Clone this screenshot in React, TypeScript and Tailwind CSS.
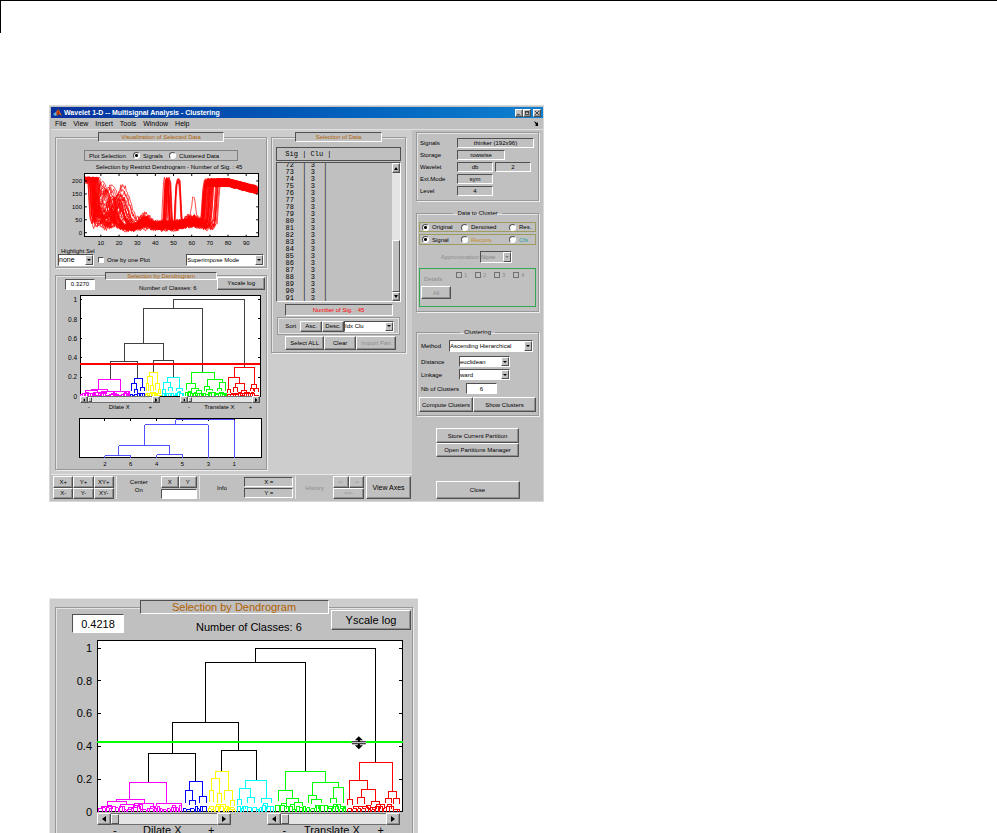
import { ReactNode } from 'react';
import { clsx } from 'clsx';

type Branch = [number, number, number, number, number];

// [left, right, top, left foot, right foot]
const trunk: Branch[] = [
  [158, 278, 8, 22, 122],
  [108, 208, 22, 82, 131],
  [75, 141, 82, 113, 110],
  [51, 98, 113, 142, 141],
  [124, 159, 110, 131, 140],
];

const clusters: { color: string; from: number; to: number; branches: Branch[] }[] = [
  {
    color: '#ff00ff', from: 1, to: 84,
    branches: [[32, 69, 142, 159, 163], [19, 47, 159, 161, 163], [59, 84, 163, 166, 167], [10, 29, 161, 165, 164], [23, 36, 164, 167, 167], [37, 56, 163, 166, 167], [4, 15, 166, 168, 168]],
  },
  {
    color: '#0000ff', from: 86, to: 110,
    branches: [[92, 105, 141, 150, 156], [88, 95, 150, 163, 160], [102, 109, 156, 163, 163], [92, 98, 160, 165, 165]],
  },
  {
    color: '#ffff00', from: 111, to: 138,
    branches: [[118, 131, 131, 138, 150], [114, 122, 138, 150, 153], [127, 135, 150, 160, 160], [112, 116, 150, 162, 162], [120, 124, 153, 163, 163], [133, 137, 160, 166, 166]],
  },
  {
    color: '#00ffff', from: 140, to: 176,
    branches: [[148, 169, 140, 148, 158], [142, 153, 148, 159, 157], [164, 174, 158, 163, 163], [150, 157, 157, 163, 163], [140, 144, 159, 165, 165]],
  },
  {
    color: '#00ff00', from: 178, to: 248,
    branches: [[188, 228, 131, 150, 142], [181, 195, 150, 161, 158], [215, 241, 142, 155, 147], [189, 201, 158, 165, 162], [211, 219, 155, 163, 159], [236, 246, 147, 158, 163], [214, 224, 159, 164, 163], [233, 239, 158, 163, 163], [197, 205, 162, 166, 166]],
  },
  {
    color: '#ff0000', from: 250, to: 303,
    branches: [[262, 295, 122, 140, 151], [252, 270, 140, 159, 149], [264, 278, 149, 157, 161], [291, 299, 151, 158, 158], [260, 267, 157, 164, 164], [274, 282, 161, 165, 165], [250, 255, 159, 165, 165], [288, 294, 158, 163, 163], [296, 302, 158, 164, 164]],
  },
];

const miniTree: Branch[] = [
  [96, 155, 1, 6, 39],
  [65, 129, 6, 27, 39],
  [39, 90, 27, 37, 36],
  [25, 51, 37, 39, 39],
  [77, 103, 36, 39, 39],
];

const miniLabels = ['2', '6', '4', '5', '3', '1'];

const toPath = (branches: Branch[]) =>
  branches.map(([l, r, t, lf, rf]) => `M${l} ${lf}V${t}H${r}V${rf}`).join('');

const noise = (n: number) => {
  const v = Math.sin(n * 12.9898) * 43758.5453;
  return v - Math.floor(v);
};

// The dense fringe of small brackets at the foot of each cluster
const leafPath = (from: number, to: number) => {
  let d = '';
  let x = from;
  while (x + 2 <= to) {
    const w = Math.min(2 + Math.floor(noise(x) * 3), to - x);
    const top = 165 + Math.floor(noise(x + 400) * 5);
    d += `M${x} 171V${top}H${x + w}V171`;
    if (noise(x + 800) > 0.6 && x + w + 2 <= to) {
      d += `M${x + 1} ${top}V${top - 2}H${x + w + 2}V168`;
    }
    x += w + Math.floor(noise(x + 90) * 2);
  }
  return d;
};

const bump = (x: number, c: number, w: number) => Math.exp(-(((x - c) / w) ** 4));
const hill = (x: number, c: number, w: number) => Math.exp(-(((x - c) / w) ** 2));
const step = (x: number, c: number, w = 0.6) => 1 / (1 + Math.exp(-(x - c) / w));

const signalPath = (i: number) => {
  const drop = 3.5 + noise(i) * 5.5;
  const rise = 65.5 + noise(i + 50) * 10;
  const hump = 11 + noise(i + 100) * 12;
  const humpHeight = 30 + noise(i + 150) * 125;
  const base = 10 + noise(i + 200) * 34;
  let d = '';
  for (let x = 1.5; x <= 96; x += 0.5) {
    const jitter = noise(i * 211 + x * 7) - 0.5;
    let y = base + jitter * 18 - hill(x, 29, 9) * base * 0.35;
    y += 185 * (1 - step(x, drop, 0.3));
    y += 75 * hill(x, 9, 3) * noise(i + 7);
    y += humpHeight * hill(x, hump, 3 + noise(i + 9) * 3);
    y += noise(i + 250) * 45 * hill(x, 34, 4);
    if (i % 3 === 0) y += 180 * bump(x, 45 + noise(i + 2) * 3, 1.3);
    if (i % 9 === 1) y += 175 * bump(x, 51.8 + noise(i + 3), 1.6);
    if (i === 5) y += 95 * hill(x, 61, 1.5);
    y += noise(i + 4) * 30 * hill(x, 60, 5);
    const up = step(x, rise, 0.35);
    const plateau = 194 - Math.max(0, x - 80) * 1.8 + jitter * 34;
    y = y * (1 - up) + plateau * up;
    y = Math.min(y, 206 + jitter * 20);
    d += `${d ? 'L' : 'M'}${(16 + (x - 10) * 1.825).toFixed(1)} ${(59 - y * 0.26).toFixed(1)}`;
  }
  return d;
};

const signals = Array.from({ length: 45 }, (_, i) => signalPath(i));

const raised = 'border border-t-white border-l-white border-r-[#505050] border-b-[#505050] bg-[#c0c0c0]';
const sunken = 'border border-t-[#505050] border-l-[#505050] border-r-white border-b-white';
const groove = 'min-w-0 border border-[#989898] shadow-[1px_1px_0_#eeeeee,inset_1px_1px_0_#e4e4e4]';

function Button({ children, className, disabled }: { children: ReactNode; className?: string; disabled?: boolean }) {
  return (
    <button
      type="button"
      disabled={disabled}
      className={clsx(
        'flex items-center justify-center whitespace-nowrap shadow-[inset_-1px_-1px_0_#909090]',
        raised,
        disabled && 'text-[#8c8c8c]',
        className
      )}
    >
      {children}
    </button>
  );
}

function Select({ value, label, className, disabled }: { value: string; label: string; className?: string; disabled?: boolean }) {
  return (
    <div className={clsx('relative', sunken, disabled ? 'bg-[#c0c0c0]' : 'bg-white', className)}>
      <select
        aria-label={label}
        disabled={disabled}
        defaultValue={value}
        className={clsx('block h-full w-full appearance-none bg-transparent', disabled && 'text-[#808080]')}
      >
        <option>{value}</option>
      </select>
      <span className={clsx('pointer-events-none absolute inset-y-0 right-0 flex w-2 items-center justify-center', raised)}>
        <svg viewBox="0 0 4 2" className="w-1" fill={disabled ? '#808080' : '#000'}>
          <path d="M0 0H4L2 2Z" />
        </svg>
      </span>
    </div>
  );
}

function Radio({ name, label, checked, className }: { name: string; label: string; checked?: boolean; className?: string }) {
  return (
    <label className={clsx('flex items-center gap-[3px] whitespace-nowrap', className)}>
      <input
        type="radio"
        name={name}
        defaultChecked={checked}
        className="size-[7px] shrink-0 appearance-none rounded-full border border-t-[#505050] border-l-[#505050] border-r-white border-b-white bg-white checked:bg-[radial-gradient(#000_0_1px,#fff_2px)]"
      />
      {label}
    </label>
  );
}

function Slider({ label, large }: { label: string; large?: boolean }) {
  const arrow = large ? 'w-[14px]' : 'w-2';
  return (
    <div className={clsx('flex min-w-0 flex-1', large ? 'h-3' : 'h-[7px]')}>
      <Button className={clsx('shrink-0', arrow)}>
        <svg viewBox="0 0 4 6" className={large ? 'h-[6px]' : 'h-[4px]'}><path d="M4 0V6L0 3Z" /></svg>
      </Button>
      <input
        type="range"
        aria-label={label}
        defaultValue={0}
        className={clsx(
          'h-full w-full min-w-0 flex-1 appearance-none border-y border-[#707070] bg-[#e4e4e4]',
          '[&::-webkit-slider-thumb]:appearance-none [&::-webkit-slider-thumb]:border [&::-webkit-slider-thumb]:border-t-white [&::-webkit-slider-thumb]:border-l-white [&::-webkit-slider-thumb]:border-r-[#505050] [&::-webkit-slider-thumb]:border-b-[#505050] [&::-webkit-slider-thumb]:bg-[#c0c0c0]',
          large
            ? '[&::-webkit-slider-thumb]:h-[10px] [&::-webkit-slider-thumb]:w-2'
            : '[&::-webkit-slider-thumb]:h-[5px] [&::-webkit-slider-thumb]:w-1'
        )}
      />
      <Button className={clsx('shrink-0', arrow)}>
        <svg viewBox="0 0 4 6" className={large ? 'h-[6px]' : 'h-[4px]'}><path d="M0 0V6L4 3Z" /></svg>
      </Button>
    </div>
  );
}

function Dendrogram({ threshold, color, cursor }: { threshold: number; color: string; cursor?: boolean }) {
  return (
    <svg viewBox="-22 -2 332 174" className="block w-full overflow-visible" fill="none">
      <g shapeRendering="crispEdges" strokeWidth="1">
        <rect width="305" height="171" fill="#fff" stroke="#000" vectorEffect="non-scaling-stroke" />
        {[8, 40, 73, 106, 139].map((y) => (
          <path key={y} d={`M0 ${y}h4M305 ${y}h-4`} stroke="#000" vectorEffect="non-scaling-stroke" />
        ))}
        <path d={toPath(trunk)} stroke={cursor ? '#000' : '#404040'} vectorEffect="non-scaling-stroke" />
        {clusters.map((c) => (
          <path
            key={c.color}
            d={toPath(c.branches) + leafPath(c.from, c.to)}
            stroke={c.color}
            vectorEffect="non-scaling-stroke"
          />
        ))}
        <path d={`M0 ${threshold}H305`} stroke={color} strokeWidth="2" vectorEffect="non-scaling-stroke" />
      </g>
      <g fill="#000" fontSize="11" textAnchor="end">
        {['1', '0.8', '0.6', '0.4', '0.2', '0'].map((t, i) => (
          <text key={t} x="-5" y={12 + i * 32.6}>{t}</text>
        ))}
      </g>
      {cursor && (
        <g>
          <path d="M254 99h14v6h-14z" fill="#fff" />
          <path d="M261 96l4 4h-3v1h6v1h-14v-1h6v-1h-3zM261 109l4-4h-3v-1h6v-1h-14v1h6v1h-3z" fill="#000" />
        </g>
      )}
    </svg>
  );
}

function SliderRow({ large }: { large?: boolean }) {
  return (
    <div className={large ? 'mr-2 ml-[22px]' : 'mr-[3px] ml-[13px]'}>
      <div className={clsx('flex', large ? 'gap-9' : 'gap-5')}>
        <Slider label="Dilate X" large={large} />
        <Slider label="Translate X" large={large} />
      </div>
      <div className={clsx('flex', large ? 'gap-9 leading-[10px]' : 'gap-5')}>
        {['Dilate X', 'Translate X'].map((t) => (
          <div key={t} className={clsx('flex flex-1 justify-between', large ? 'px-4' : 'px-2')}>
            <span>-</span>
            <span>{t}</span>
            <span>+</span>
          </div>
        ))}
      </div>
    </div>
  );
}

function MiniTree() {
  return (
    <svg viewBox="-13 -1 197 51" className="block w-full" fill="none">
      <g shapeRendering="crispEdges">
        <rect width="182" height="39" fill="#fff" stroke="#000" />
        {miniLabels.map((t, i) => <path key={t} d={`M${25 + i * 26} 0v2`} stroke="#000" />)}
        <path d={toPath(miniTree)} stroke="#5050ff" />
      </g>
      <g fill="#000" fontSize="6" textAnchor="middle">
        {miniLabels.map((t, i) => <text key={t} x={25 + i * 26} y="47">{t}</text>)}
      </g>
    </svg>
  );
}

function SignalsPlot() {
  return (
    <svg viewBox="-16 -2 194 76" className="block w-full" fill="none">
      <rect width="174" height="63" fill="#fff" stroke="#000" shapeRendering="crispEdges" />
      {signals.map((d, i) => <path key={i} d={d} stroke="#ff0000" strokeWidth="0.7" />)}
      {[7, 20, 33, 46, 59].map((y) => <path key={y} d={`M0 ${y}h2M174 ${y}h-2`} stroke="#000" />)}
      <g fill="#000" fontSize="6" textAnchor="end">
        {[200, 150, 100, 50, 0].map((v, i) => <text key={v} x="-3" y={9 + i * 13}>{v}</text>)}
      </g>
      <g fill="#000" fontSize="6" textAnchor="middle">
        {[10, 20, 30, 40, 50, 60, 70, 80, 90].map((v, i) => (
          <g key={v}>
            <path d={`M${16 + i * 18.25} 0v2M${16 + i * 18.25} 63v-2`} stroke="#000" />
            <text x={16 + i * 18.25} y="71">{v}</text>
          </g>
        ))}
      </g>
    </svg>
  );
}

function VisualizationPanel() {
  return (
    <fieldset className={clsx('bg-[#c0c0c0] pb-px', groove)}>
      <legend className={clsx('mx-auto h-[10px] w-[126px] bg-[#c0c0c0] text-center text-[#b06000]', sunken)}>
        Visualization of Selected Data
      </legend>
      <div className="mx-auto mt-2 flex h-[11px] w-[154px] items-center border border-[#808080] pl-1">
        <span className="w-11">Plot Selection</span>
        <Radio name="plot" label="Signals" checked className="w-9" />
        <Radio name="plot" label="Clustered Data" />
      </div>
      <p className="mt-[2px] mb-px pl-4 text-center">Selection by Restrict Dendrogram - Number of Sig. : 45</p>
      <div className="pr-1 pl-[13px]">
        <SignalsPlot />
      </div>
      <p className="pl-[5px] leading-[6px]">Highlight Sel</p>
      <div className="flex items-center px-[2px]">
        <Select label="Highlight Sel" value="none" className="h-3 w-9 text-[7px]" />
        <label className="ml-1 flex items-center gap-[3px]">
          <input type="checkbox" className={clsx('size-[6px] appearance-none bg-white', sunken)} />
          One by one Plot
        </label>
        <Select label="Display mode" value="Superimpose Mode" className="ml-auto h-3 w-[78px]" />
      </div>
    </fieldset>
  );
}

function DendrogramPanel() {
  return (
    <fieldset className={clsx('flex-1 bg-[#c0c0c0]', groove)}>
      <legend className={clsx('mx-auto h-2 w-[112px] bg-[#c0c0c0] text-center leading-[7px] text-[#b06000]', sunken)}>
        Selection by Dendrogram
      </legend>
      <div className="-mt-[3px] flex items-start pr-px pl-[9px]">
        <input
          aria-label="Threshold"
          defaultValue="0.3270"
          className={clsx('mt-[2px] h-[11px] w-[30px] bg-white text-center', sunken)}
        />
        <span className="mt-[7px] ml-11">Number of Classes: 6</span>
        <Button className="ml-auto h-[13px] w-12">Yscale log</Button>
      </div>
      <div className="mt-[2px] pr-[3px] pl-[11px]">
        <Dendrogram threshold={117} color="#ff0000" />
        <SliderRow />
        <div className="mt-[7px]">
          <MiniTree />
        </div>
      </div>
    </fieldset>
  );
}

function SelectionPanel() {
  const rows = Array.from({ length: 20 }, (_, i) => 72 + i);
  return (
    <fieldset className={clsx('self-start bg-[#c0c0c0] px-1 pb-[2px]', groove)}>
      <legend className={clsx('mx-auto h-[10px] w-[87px] bg-[#c0c0c0] text-center text-[#b06000]', sunken)}>
        Selection of Data
      </legend>
      <div className="mt-[5px] h-[14px] border border-[#505050] pt-[2px] pl-1 font-['Liberation_Mono',monospace] text-[7px] whitespace-pre">
        {' Sig | Clu |'}
      </div>
      <div className="mt-px flex h-[140px] overflow-hidden border border-t-[#505050] border-r-white border-b-white border-l-[#505050]">
        <ul className="flex flex-1 flex-col justify-center font-['Liberation_Mono',monospace] text-[7px] leading-[7px] whitespace-pre">
          {rows.map((n) => <li key={n}>{`  ${n}  | 3  |`}</li>)}
        </ul>
        <div className="flex w-2 flex-col bg-[#e4e4e4]">
          <Button className="h-[10px]"><svg viewBox="0 0 4 3" className="w-1"><path d="M0 3H4L2 0Z" /></svg></Button>
          <div className="flex-[66]" />
          <div className={clsx('flex-[50]', raised)} />
          <Button className="h-[9px]"><svg viewBox="0 0 4 3" className="w-1"><path d="M0 0H4L2 3Z" /></svg></Button>
        </div>
      </div>
      <div className={clsx('mx-auto mt-[2px] h-3 w-[108px] text-center leading-[10px] text-[#ff0000]', sunken)}>
        Number of Sig. : 45
      </div>
      <div className="mx-[2px] mt-[2px] flex h-4 items-center border border-[#e4e4e4] pr-1 pl-[6px] outline outline-[#989898]">
        <span className="w-[15px]">Sort</span>
        <Button className="h-[11px] flex-1">Asc.</Button>
        <Button className="h-[11px] flex-1">Desc.</Button>
        <Select label="Sort by" value="Idx Clu" className="h-[11px] w-[50px]" />
      </div>
      <div className="mt-[2px] flex pr-[5px] pl-[9px]">
        <Button className="h-[14px] w-[39px]">Select ALL</Button>
        <Button className="h-[14px] w-8">Clear</Button>
        <Button className="h-[14px] flex-1" disabled>Import Part</Button>
      </div>
    </fieldset>
  );
}

const info = [
  { label: 'Signals', values: [{ text: 'thinker (192x96)', width: 'w-[77px]' }] },
  { label: 'Storage', values: [{ text: 'rowwise', width: 'w-12' }] },
  { label: 'Wavelet', values: [{ text: 'db', width: 'w-9' }, { text: '2', width: 'w-9' }] },
  { label: 'Ext.Mode', values: [{ text: 'sym', width: 'w-9' }] },
  { label: 'Level', values: [{ text: '4', width: 'w-9' }] },
];

function ClusterSettings() {
  return (
    <aside className="flex w-[131px] shrink-0 flex-col bg-[#c0c0c0] px-1 pt-[2px]">
      <dl className={clsx('flex h-[69px] flex-col gap-px px-[3px] pt-1', groove)}>
        {info.map((row) => (
          <div key={row.label} className="flex h-[11px] items-center">
            <dt className="w-[37px]">{row.label}</dt>
            <dd className="flex gap-[2px]">
              {row.values.map((v) => (
                <span key={v.text} className={clsx('h-[10px] text-center', sunken, v.width)}>{v.text}</span>
              ))}
            </dd>
          </div>
        ))}
      </dl>

      <fieldset className={clsx('mt-2 h-[103px] px-[2px]', groove)}>
        <legend className="mx-auto px-1">Data to Cluster</legend>
        <div className="mt-[5px] flex h-[10px] items-center border border-[#9c9c60] pl-[2px]">
          <Radio name="data" label="Original" checked className="w-[39px]" />
          <Radio name="data" label="Denoised" className="w-12" />
          <Radio name="data" label="Res." />
        </div>
        <div className="mt-[2px] flex h-[11px] items-center border border-[#9c9c60] pl-[2px]">
          <Radio name="kind" label="Signal" checked className="w-[39px]" />
          <Radio name="kind" label="Recons." className="w-12 text-[#c88a20]" />
          <Radio name="kind" label="Cfs" className="text-[#20a0a0]" />
        </div>
        <div className="mt-[6px] flex items-center justify-end gap-px pr-6 text-[#8c8c8c]">
          <span>Approximation</span>
          <Select label="Approximation" value="None" disabled className="h-3 w-8" />
        </div>
        <div className="mt-[5px] h-[39px] border border-[#30a850] text-[#8c8c8c]">
          <div className="flex pt-[2px] pl-1">
            <span className="w-8 pt-1">Details</span>
            {['1', '2', '3', '4'].map((n) => (
              <label key={n} className="flex h-2 w-[19px] items-center gap-[2px]">
                <input type="checkbox" disabled className="size-[6px] appearance-none border border-[#707070]" />
                {n}
              </label>
            ))}
          </div>
          <Button className="ml-px mt-[3px] h-[13px] w-[30px]" disabled>All</Button>
        </div>
      </fieldset>

      <fieldset className={clsx('mt-4 px-[2px] pb-[3px]', groove)}>
        <legend className="mx-auto px-1">Clustering</legend>
        <div className="mt-1 flex items-center justify-between pr-[3px] pl-[2px]">
          <span>Method</span>
          <Select label="Method" value="Ascending Hierarchical" className="h-3 w-[84px]" />
        </div>
        <div className="mt-1 flex items-center pl-[2px]">
          <span className="w-[38px]">Distance</span>
          <Select label="Distance" value="euclidean" className="h-[11px] w-[51px]" />
        </div>
        <div className="mt-[2px] flex items-center pl-[2px]">
          <span className="w-[38px]">Linkage</span>
          <Select label="Linkage" value="ward" className="h-[11px] w-[51px]" />
        </div>
        <label className="mt-[3px] flex items-center pl-[2px]">
          <span className="w-[45px]">Nb of Clusters</span>
          <input defaultValue="6" className={clsx('h-[11px] w-[31px] bg-white text-center', sunken)} />
        </label>
        <div className="mt-[3px] flex">
          <Button className="h-[15px] w-[54px]">Compute Clusters</Button>
          <Button className="h-[15px] flex-1">Show Clusters</Button>
        </div>
      </fieldset>

      <div className="mx-5 mt-3">
        <Button className="h-[15px] w-full">Store Current Partition</Button>
        <Button className="h-[14px] w-full">Open Partitions Manager</Button>
      </div>
      <Button className="mx-auto mt-auto mb-[2px] h-[18px] w-[84px]">Close</Button>
    </aside>
  );
}

function Toolbar() {
  return (
    <div className="flex h-[27px] gap-[2px] border-t border-[#e8e8e8] bg-[#c0c0c0] px-px pt-px pb-[2px]">
      <div className="grid w-[62px] grid-cols-3 grid-rows-2 pl-px">
        {['X+', 'Y+', 'XY+', 'X-', 'Y-', 'XY-'].map((t) => <Button key={t}>{t}</Button>)}
      </div>
      <div className="flex flex-[80] border-l border-[#e8e8e8]">
        <div className="flex-1 pt-[2px] text-center">Center<br />On</div>
        <div className="w-9">
          <div className="grid h-3 grid-cols-2"><Button>X</Button><Button>Y</Button></div>
          <input aria-label="Center on" className={clsx('mt-px block h-[10px] w-full bg-white', sunken)} />
        </div>
      </div>
      <div className="flex flex-[94] border-l border-[#e8e8e8]">
        <div className="flex-1 self-center text-center">Info</div>
        <div className="flex w-[49px] flex-col justify-between py-px">
          <div className={clsx('text-center', sunken)}>X =</div>
          <div className={clsx('text-center', sunken)}>Y =</div>
        </div>
      </div>
      <div className="flex flex-[68] border-l border-[#e8e8e8] text-[#8c8c8c]">
        <div className="flex-1 self-center text-center">History</div>
        <div className="grid w-[31px] grid-cols-2 grid-rows-2">
          <Button disabled>&lt;-</Button>
          <Button disabled>-&gt;</Button>
          <Button disabled className="col-span-2">&lt;&lt;-</Button>
        </div>
      </div>
      <Button className="w-[45px] text-[7px]">View Axes</Button>
    </div>
  );
}

function ClusteringWindow() {
  return (
    <section className="w-full max-w-[495px] border border-[#d8d8d8] bg-[#c0c0c0] pt-px pl-px text-[6px] leading-[8px]">
      <header className="flex h-[11px] items-center bg-gradient-to-r from-[#08309c] to-[#1080d0] pr-[2px] pl-[2px] text-white">
        <svg viewBox="0 0 9 8" className="mr-[2px] h-2">
          <path d="M0 5L3 3L4 6L2 7Z" fill="#60b0e0" />
          <path d="M3 3L5.500 0L9 7L6 5L4 7Z" fill="#e86018" />
          <path d="M5.500 0L6 5L4 6Z" fill="#802010" />
        </svg>
        <h1 className="flex-1 text-[7px] font-bold">Wavelet 1-D -- Multisignal Analysis - Clustering</h1>
        <Button className="size-2"><svg viewBox="0 0 6 6" className="size-1"><path d="M0 5H4V6H0Z" /></svg></Button>
        <Button className="size-2"><svg viewBox="0 0 6 6" className="size-1" fill="none" stroke="#000"><path d="M.5 .5H5.500V5.500H.5ZM.5 1.500H5.500" /></svg></Button>
        <Button className="ml-[2px] size-2"><svg viewBox="0 0 6 6" className="size-1" stroke="#000"><path d="M0 0L6 6M6 0L0 6" /></svg></Button>
      </header>
      <nav className="flex h-3 items-center gap-[7px] border-b border-[#e0e0e0] px-1 text-[7px]">
        {['File', 'View', 'Insert', 'Tools', 'Window', 'Help'].map((m) => <button key={m} type="button">{m}</button>)}
        <svg viewBox="0 0 5 5" className="ml-auto size-[5px]"><path d="M0 0L3 2L4 1V5H1L2 4Z" /></svg>
      </nav>
      <div className="flex">
        <div className="flex min-w-0 flex-1 flex-col bg-[#cdcdcd]">
          <div className="grid grid-cols-[214fr_136fr] gap-x-1 pt-[2px] pr-[6px] pb-1 pl-1">
            <div className="flex min-w-0 flex-col gap-1">
              <VisualizationPanel />
              <DendrogramPanel />
            </div>
            <SelectionPanel />
          </div>
          <Toolbar />
        </div>
        <ClusterSettings />
      </div>
    </section>
  );
}

function DendrogramDetail() {
  return (
    <section className="h-[236px] w-full max-w-[369px] overflow-hidden border-t border-l border-[#e8e8e8] bg-[#cdcdcd] px-[5px] pt-px text-[11px] leading-[12px]">
      <fieldset className={clsx('h-full bg-[#c0c0c0]', groove)}>
        <legend className={clsx('mx-auto h-[14px] w-[189px] bg-[#c0c0c0] text-center text-[#b06000]', sunken)}>
          Selection by Dendrogram
        </legend>
        <div className="-mt-1 flex items-start pr-px pl-4">
          <input
            aria-label="Threshold"
            defaultValue="0.4218"
            className={clsx('mt-1 h-[19px] w-[52px] bg-white text-center', sunken)}
          />
          <span className="mt-[11px] ml-[72px]">Number of Classes: 6</span>
          <Button className="ml-auto h-5 w-20">Yscale log</Button>
        </div>
        <div className="mt-[5px] pr-1 pl-[19px]">
          <Dendrogram threshold={102} color="#00ff00" cursor />
          <SliderRow large />
        </div>
      </fieldset>
    </section>
  );
}

export default function App() {
  return (
    <main className="border-t border-black bg-white font-['Liberation_Sans',Arial,sans-serif] text-black">
      <div className="h-8 border-l border-black" />
      <div className="flex flex-col gap-24 pt-[72px] pl-[49px]">
        <ClusteringWindow />
        <DendrogramDetail />
      </div>
    </main>
  );
}
